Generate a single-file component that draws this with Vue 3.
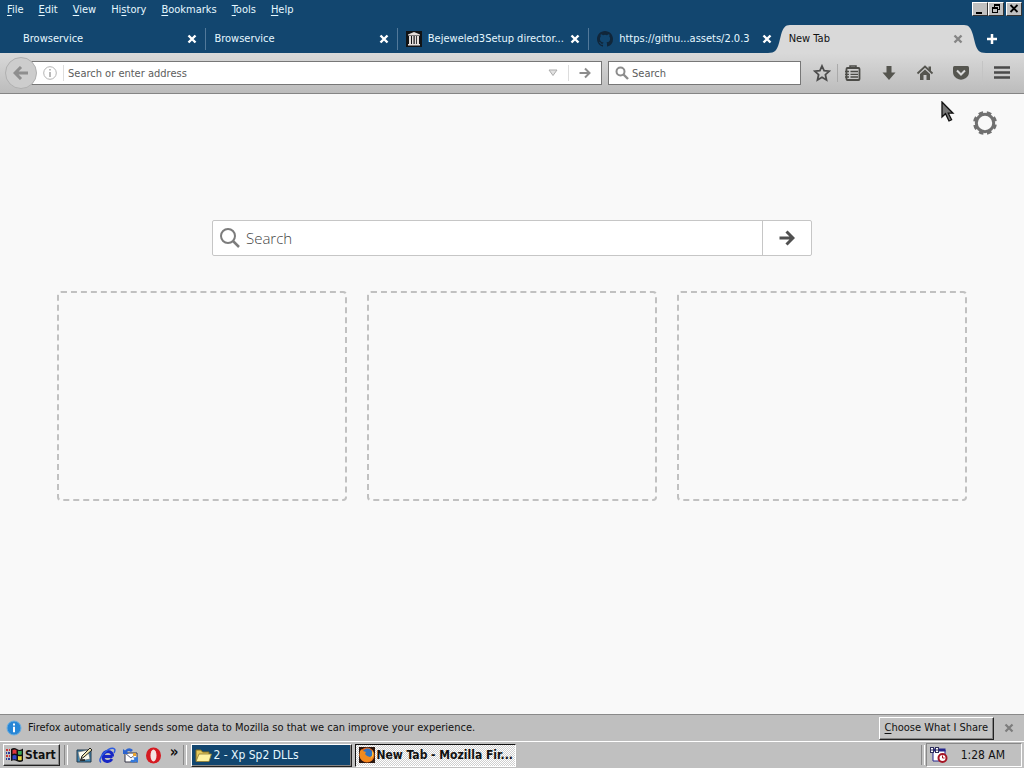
<template>
  <div class="desktop">
    <header class="chrome">
      <div class="menu-row">
        <nav class="menus">
          <button v-for="m in menus" :key="m.label" type="button" class="menu">
            {{ m.label.slice(0, m.key) }}<u>{{ m.label[m.key] }}</u>{{ m.label.slice(m.key + 1) }}
          </button>
        </nav>
        <div class="win-buttons">
          <button type="button" class="win-btn" aria-label="Minimize">
            <svg width="14" height="12" viewBox="0 0 14 12"><path d="M3 9h6v2H3z" /></svg>
          </button>
          <button type="button" class="win-btn" aria-label="Restore">
            <svg width="14" height="12" viewBox="0 0 14 12">
              <path fill-rule="evenodd" d="M5 1h6v6H9V6h1V3H6v1H5zM3 4h6v6H3zm1 2v3h4V6z" />
            </svg>
          </button>
          <button type="button" class="win-btn win-close" aria-label="Close">
            <svg width="14" height="12" viewBox="0 0 14 12">
              <path d="M3.5 2l7 7M10.5 2l-7 7" stroke="#000" stroke-width="1.8" />
            </svg>
          </button>
        </div>
      </div>

      <div class="tab-strip">
        <div v-for="(tab, i) in tabs" :key="i" class="tab" :class="{ active: tab.active, divided: i < 3 }">
          <span v-if="tab.active" class="tab-shape">
            <svg class="curve" width="22" height="28" viewBox="0 0 22 28">
              <path d="M0 28C7 28 9 25 11 18L13 10C15 3 17 0 22 0V28Z" fill="#d9d9d9" />
            </svg>
            <span class="tab-fill"></span>
            <svg class="curve" width="22" height="28" viewBox="0 0 22 28">
              <path d="M22 28C15 28 13 25 11 18L9 10C7 3 5 0 0 0V28Z" fill="#d9d9d9" />
            </svg>
          </span>
          <svg v-if="tab.icon === 'archive'" class="tab-icon" width="16" height="16" viewBox="0 0 16 16">
            <path d="M0 0h16v16H0z" fill="#101214" />
            <path d="M2 4.5V3.6L8 1l6 2.600v.9zM3 5h2v8H3zM6 5h1.500v8H6zM8.700 5h1.500v8H8.700zM11 5h2v8h-2zM2 13h12v1.500H2z" fill="#e4dedb" />
          </svg>
          <svg v-else-if="tab.icon === 'github'" class="tab-icon" width="16" height="16" viewBox="0 0 16 16">
            <path
              d="M8 0C3.580 0 0 3.580 0 8c0 3.540 2.290 6.530 5.470 7.590.4.070.55-.17.55-.38 0-.19-.01-.82-.01-1.490-2.010.37-2.530-.49-2.690-.94-.09-.23-.48-.94-.82-1.130-.28-.15-.68-.52-.01-.53.63-.01 1.080.58 1.230.82.720 1.210 1.870.87 2.330.66.07-.52.28-.87.51-1.070-1.780-.2-3.640-.89-3.640-3.950 0-.87.31-1.590.82-2.150-.08-.2-.36-1.020.08-2.120 0 0 .67-.21 2.200.82a7.600 7.600 0 0 1 4 0c1.530-1.040 2.200-.82 2.200-.82.44 1.100.16 1.920.08 2.120.51.56.82 1.270.82 2.150 0 3.070-1.870 3.750-3.650 3.950.29.25.54.73.54 1.480 0 1.070-.01 1.930-.01 2.200 0 .21.15.46.55.38A8.010 8.010 0 0 0 16 8c0-4.420-3.580-8-8-8z"
              fill="#10263a"
            />
          </svg>
          <span class="tab-label">{{ tab.label }}</span>
          <button type="button" class="tab-close" aria-label="Close tab">
            <svg width="10" height="10" viewBox="0 0 10 10">
              <path d="M1.500 1.500l7 7M8.500 1.500l-7 7" stroke="currentColor" stroke-width="2.400" />
            </svg>
          </button>
        </div>
        <button type="button" class="new-tab" aria-label="New tab">
          <svg width="12" height="12" viewBox="0 0 12 12">
            <path d="M6 1v10M1 6h10" stroke="#fff" stroke-width="2.500" />
          </svg>
        </button>
      </div>

      <div class="nav-bar">
        <button type="button" class="back" aria-label="Back">
          <svg width="16" height="14" viewBox="0 0 16 14">
            <path d="M8 1L2 7l6 6M2.500 7H15" fill="none" stroke="#8e8e8e" stroke-width="3" />
          </svg>
        </button>
        <div class="url-bar">
          <svg width="14" height="14" viewBox="0 0 14 14">
            <circle cx="7" cy="7" r="6.300" fill="none" stroke="#b4b4b4" />
            <path d="M6.200 3h1.600v1.600H6.200zM6.200 6h1.600v5H6.200z" fill="#a8a8a8" />
          </svg>
          <span class="thin-line"></span>
          <input type="text" class="url-input" placeholder="Search or enter address" aria-label="Address" />
          <svg width="10" height="8" viewBox="0 0 10 8">
            <path d="M1 1h8L5 6.500z" fill="#e2e2e2" stroke="#ababab" />
          </svg>
          <span class="thin-line go-line"></span>
          <button type="button" class="plain" aria-label="Go">
            <svg width="12" height="12" viewBox="0 0 12 12">
              <path d="M6 1.500L10.500 6 6 10.500M10 6H0.500" fill="none" stroke="#8d8d8d" stroke-width="2" />
            </svg>
          </button>
        </div>
        <div class="search-bar">
          <svg width="14" height="14" viewBox="0 0 14 14">
            <circle cx="5.500" cy="5.500" r="4" fill="none" stroke="#8c8c8c" stroke-width="2" />
            <path d="M8.500 8.500L13 13" stroke="#8c8c8c" stroke-width="2.400" />
          </svg>
          <input type="text" class="url-input" placeholder="Search" aria-label="Search" />
        </div>
        <div class="tools">
          <button type="button" class="tool star" aria-label="Bookmark">
            <svg width="18" height="18" viewBox="0 0 18 18">
              <path d="M9 2l2.100 4.700 5.100.5-3.800 3.500 1.100 5.200L9 13.200l-4.500 2.700 1.100-5.200L1.800 7.200l5.100-.5z" fill="none" stroke="#4c4c4c" stroke-width="1.800" />
            </svg>
          </button>
          <button type="button" class="tool" aria-label="Bookmarks list">
            <svg width="18" height="18" viewBox="0 0 18 18">
              <path d="M6 4V2h6v2" fill="none" stroke="#4b4b47" stroke-width="1.500" />
              <rect x="2.500" y="4" width="13" height="12" rx="1" fill="none" stroke="#4b4b47" stroke-width="1.800" />
              <path d="M1 7.500h4M6.500 7.500H14M1 10.300h4M6.500 10.300H14M1 13h4M6.500 13H14" fill="none" stroke="#4b4b47" stroke-width="1.300" />
            </svg>
          </button>
          <button type="button" class="tool" aria-label="Downloads">
            <svg width="18" height="18" viewBox="0 0 18 18">
              <path d="M6.500 2h5v6.500h4L9 16 2.500 8.500h4z" fill="#55554f" />
            </svg>
          </button>
          <button type="button" class="tool" aria-label="Home">
            <svg width="18" height="18" viewBox="0 0 18 18">
              <path d="M1.500 9.500L9 2.500l7.500 7" fill="none" stroke="#55554f" stroke-width="1.800" />
              <path d="M12.500 2.500H15v5l-2.500-2zM4 10l5-4.500L14 10v6h-3.500v-5h-3v5H4z" fill="#55554f" />
            </svg>
          </button>
          <button type="button" class="tool" aria-label="Pocket">
            <svg width="18" height="18" viewBox="0 0 18 18">
              <path d="M2.500 2h13Q17 2 17 3.500V8q0 4-3.500 6.300Q9 17 4.500 14.300 1 12 1 8V3.500Q1 2 2.500 2z" fill="#55554f" />
              <path d="M5 6.500L9 10.500l4-4" fill="none" stroke="#d8d8d8" stroke-width="2" />
            </svg>
          </button>
          <button type="button" class="tool burger" aria-label="Open menu">
            <svg width="18" height="18" viewBox="0 0 18 18">
              <path d="M1 3.500h16M1 8.500h16M1 13.500h16" stroke="#4a4a4a" stroke-width="2.600" />
            </svg>
          </button>
        </div>
      </div>
    </header>

    <main class="newtab">
      <div class="newtab-top">
        <button type="button" class="plain" aria-label="Customize">
          <svg width="24" height="24" viewBox="0 0 24 24">
            <circle cx="12" cy="12" r="8.700" fill="none" stroke="#707070" stroke-width="3" />
            <circle cx="12" cy="12" r="10.600" fill="none" stroke="#707070" stroke-width="2.600" stroke-dasharray="4.660 3.660" stroke-dashoffset="-1.500" />
          </svg>
        </button>
      </div>
      <form class="search-form" @submit.prevent>
        <svg class="glass" width="20" height="20" viewBox="0 0 20 20">
          <circle cx="8" cy="8" r="7" fill="none" stroke="#7c7c7c" stroke-width="2" />
          <path d="M13 13l6 6" stroke="#7c7c7c" stroke-width="2.500" />
        </svg>
        <input v-model="query" type="text" class="search-input" placeholder="Search" aria-label="Search the web" />
        <button type="submit" class="search-go" aria-label="Submit search">
          <svg width="16" height="16" viewBox="0 0 16 16">
            <path d="M7.500 1.500L14 8l-6.500 6.500M13 8H0.500" fill="none" stroke="#505050" stroke-width="3" />
          </svg>
        </button>
      </form>
      <div class="tiles">
        <div v-for="n in 3" :key="n" class="tile"></div>
      </div>
      <svg class="pointer" width="14" height="22" viewBox="0 0 14 22">
        <path d="M1 1v15l3.500-3.300L8 20l2.600-1.200-3.300-6.600H12z" fill="#777" stroke="#111" stroke-width="1.300" />
      </svg>
    </main>

    <div class="notice">
      <svg width="16" height="16" viewBox="0 0 16 16">
        <circle cx="8" cy="8" r="7" fill="#2786d6" stroke="#6aaee0" />
        <path d="M7 3.500h2v2H7zM7 6.800h2v5.500H7z" fill="#fff" />
      </svg>
      <span class="notice-text">Firefox automatically sends some data to Mozilla so that we can improve your experience.</span>
      <button type="button" class="choose"><u>C</u>hoose What I Share</button>
      <button type="button" class="plain notice-close" aria-label="Dismiss">
        <svg width="10" height="10" viewBox="0 0 10 10">
          <path d="M1.500 1.500l7 7M8.500 1.500l-7 7" stroke="#7d7d7d" stroke-width="2.200" />
        </svg>
      </button>
    </div>

    <footer class="taskbar">
      <button type="button" class="start">
        <svg width="18" height="16" viewBox="0 0 18 16">
          <path d="M5 2q3-2 6 0t6-.5V14q-3 2-6 .3T5 14z" fill="#111" />
          <path d="M6.500 3q2-1 4 .1V7q-2-1-4 0z" fill="#e0343a" />
          <path d="M12 3.700q2 .6 3.700 0v3.800q-1.700.6-3.700 0z" fill="#3aa856" />
          <path d="M6.500 8.500q2-1 4 0v4.300q-2-1-4 0z" fill="#3046c8" />
          <path d="M12 9q2 .6 3.700 0v4q-1.700.6-3.700 0z" fill="#e8d53c" />
          <path d="M0 3h2M3 3h1M0 9h2M3 9h1" stroke="#c33" stroke-width="2" />
          <path d="M0 6h1M2 6h2M0 12h1M2 12h2" stroke="#2a3a9c" stroke-width="2" />
        </svg>
        Start
      </button>
      <span class="grip"></span>
      <div class="quick">
        <button type="button" class="plain" aria-label="Show Desktop">
          <svg width="17" height="17" viewBox="0 0 17 17">
            <path d="M1 3h14v12H1z" fill="#3e86b4" stroke="#23384a" />
            <path d="M2 5l10-2 2 9-10 2z" fill="#fbfbf0" stroke="#666" stroke-width=".6" />
            <path d="M5 12l1-3 8-8 2 2-8 7z" fill="#efe5b0" stroke="#222" />
            <path d="M4 13h5" stroke="#111" stroke-width="1.500" />
          </svg>
        </button>
        <button type="button" class="plain" aria-label="Internet Explorer">
          <svg width="17" height="17" viewBox="0 0 17 17">
            <path d="M13.500 9.500H4.500M13 12Q11 15 8 14.500 4 14 4 9.500 4 4.500 9 4.500q4.500 0 4.500 5" fill="none" stroke="#1726c4" stroke-width="3" />
            <path d="M2 15.500Q-1 13 4.500 6.500 12-.5 15.500 2q1 1-.5 4" fill="none" stroke="#2d5be0" stroke-width="1.500" />
          </svg>
        </button>
        <button type="button" class="plain" aria-label="Outlook Express">
          <svg width="17" height="17" viewBox="0 0 17 17">
            <path d="M3 6h12v9H3z" fill="#fff" stroke="#334" />
            <path d="M3 6l6 5 6-5" fill="none" stroke="#667" />
            <path d="M11 6h3v3h-3z" fill="#e8a32e" />
            <path d="M1 7V2l2 1.500Q7-.5 11 3L9 5Q6 3 5 5.500L7 7z" fill="#2b63cf" />
            <path d="M16 10v6l-2-1.500q-3 2-6 0l1.500-2q2 1 3-.5L11 10.500z" fill="#3479dc" />
          </svg>
        </button>
        <button type="button" class="plain" aria-label="Opera">
          <svg width="17" height="17" viewBox="0 0 17 17">
            <ellipse cx="8.500" cy="8.500" rx="7.500" ry="8" fill="#d51b22" />
            <ellipse cx="8.500" cy="8.500" rx="3" ry="6" fill="#f4e4e2" />
          </svg>
        </button>
        <button type="button" class="plain more" aria-label="More">»</button>
      </div>
      <span class="grip"></span>
      <button type="button" class="task folder">
        <svg width="17" height="15" viewBox="0 0 17 15">
          <path d="M1 13V2h5l1.500 2H14v9z" fill="#e5c95a" stroke="#806a20" />
          <path d="M1 13.500L4 6h12.500L14 13.500z" fill="#fff2a0" stroke="#8d7a32" stroke-width=".8" />
        </svg>
        <span class="task-label">2 - Xp Sp2 DLLs</span>
      </button>
      <button type="button" class="task pressed">
        <svg width="16" height="16" viewBox="0 0 16 16">
          <path d="M0 0h16v16H0z" fill="#2a1710" />
          <circle cx="8" cy="8" r="7.500" fill="#e8661b" />
          <circle cx="8.500" cy="6.500" r="5" fill="#3273bd" />
          <path d="M1 4l2-2 1 2 3 1-1 2 2 2 3 1q3-1 3-5l1 2q0 7-7 8-7-1-7.500-7z" fill="#f28a1e" />
          <path d="M13 3q2 3 1 6l-2 3q2-4 1-9z" fill="#ffd34a" />
        </svg>
        <span class="task-label">New Tab - Mozilla Fir...</span>
      </button>
      <span class="grip tray-grip"></span>
      <div class="tray">
        <svg width="18" height="16" viewBox="0 0 18 16">
          <path d="M3 3h12v11H3z" fill="#fff" stroke="#24248c" />
          <path d="M2.500 3h13" stroke="#24248c" stroke-width="3" />
          <path d="M0 0h4v6H0zM5 0h4v6H5z" fill="#30305c" />
          <path d="M1 1h2v1.500H1zM1 3.500h2V5H1zM6 1h2v1.500H6zM6 3.500h2V5H6z" fill="#fff" />
          <circle cx="12.500" cy="11" r="4" fill="#fff" stroke="#a51424" stroke-width="2" />
          <path d="M12.500 8.500V11h2" fill="none" stroke="#a51424" />
        </svg>
        <span>1:28 AM</span>
      </div>
    </footer>
  </div>
</template>

<script setup>
import { ref } from 'vue';

const query = ref('');

// key = index of the underlined access key
const menus = [
  { label: 'File', key: 0 },
  { label: 'Edit', key: 0 },
  { label: 'View', key: 0 },
  { label: 'History', key: 2 },
  { label: 'Bookmarks', key: 0 },
  { label: 'Tools', key: 0 },
  { label: 'Help', key: 0 },
];

const tabs = [
  { label: 'Browservice' },
  { label: 'Browservice' },
  { label: 'Bejeweled3Setup director...', icon: 'archive' },
  { label: 'https://githu...assets/2.0.3', icon: 'github' },
  { label: 'New Tab', active: true },
];
</script>

<style>
body {
  margin: 0;
}
</style>

<style scoped>
.desktop {
  display: flex;
  flex-direction: column;
  min-height: 100vh;
  font-family: 'DejaVu Sans Condensed', 'DejaVu Sans', sans-serif;
  font-size: 11px;
  line-height: 14px;
  color: #111;
  background: #c0c0c0;
}

button,
input {
  font: inherit;
  color: inherit;
  margin: 0;
  padding: 0;
  border: 0;
  background: none;
}

svg {
  display: block;
  flex-shrink: 0;
}

u {
  text-underline-offset: 2px;
}

.plain {
  display: flex;
  align-items: center;
}

/* title and menus */
.chrome {
  background: #12466f;
}

.menu-row {
  display: flex;
  justify-content: space-between;
  height: 25px;
}

.menus {
  display: flex;
  align-items: flex-start;
  gap: 15px;
  padding: 3px 7px;
  color: #e6f8ff;
}

.win-buttons {
  display: flex;
  align-items: flex-start;
  padding: 2px 2px 0 0;
}

.win-btn {
  width: 16px;
  height: 14px;
  background: #c0c0c0;
  border: 1px solid;
  border-color: #fff #333 #333 #fff;
}

.win-close {
  margin-left: 2px;
}

/* tabs */
.tab-strip {
  display: flex;
  height: 28px;
  padding-left: 15px;
}

.tab {
  position: relative;
  display: flex;
  flex: 1;
  align-items: center;
  min-width: 0;
  padding: 0 9px 0 8px;
  color: #e6f8ff;
}

.tab.divided::after {
  content: '';
  position: absolute;
  right: 0;
  top: 3px;
  bottom: 3px;
  border-right: 1px solid #52799a;
}

.tab-icon {
  margin-right: 6px;
}

.tab-label {
  position: relative;
  flex: 1;
  overflow: hidden;
  white-space: nowrap;
}

.tab-close {
  position: relative;
  color: #fff;
}

.tab.active {
  color: #111;
}

.tab.active .tab-close {
  color: #858585;
}

.tab-shape {
  position: absolute;
  inset: 0 -14px 0 -13px;
  display: flex;
}

.tab-fill {
  flex: 1;
  background: #d9d9d9;
}

.new-tab {
  display: flex;
  align-items: center;
  justify-content: center;
  width: 52px;
  padding-right: 13px;
}

/* navigation */
.nav-bar {
  display: flex;
  align-items: center;
  height: 40px;
  padding: 0 4px 0 5px;
  background: linear-gradient(#d9d9d9, #bcbcbc);
  border-bottom: 1px solid #858585;
}

.back {
  position: relative;
  z-index: 1;
  display: flex;
  align-items: center;
  justify-content: center;
  width: 32px;
  height: 32px;
  margin-right: -6px;
  border: 1px solid #b0b0b0;
  border-radius: 50%;
  background: #cdcdcd;
}

.url-bar,
.search-bar {
  display: flex;
  align-items: center;
  box-sizing: border-box;
  height: 24px;
  background: #fff;
  border: 1px solid #777;
}

.url-bar {
  flex: 1;
  padding: 0 10px 0 11px;
}

.search-bar {
  flex: 0 1 193px;
  margin-left: 6px;
  padding-left: 6px;
}

.thin-line {
  height: 16px;
  margin: 0 4px 0 6px;
  border-left: 1px solid #ddd;
}

.go-line {
  margin: 0 10px;
}

.url-input {
  flex: 1;
  min-width: 0;
  padding-top: 2px;
  outline: 0;
}

.search-bar .url-input {
  padding-left: 3px;
}

.url-input::placeholder {
  color: #5c5c5c;
  opacity: 1;
}

.tools {
  display: flex;
  align-items: center;
  padding-left: 5px;
}

.tool {
  display: flex;
  align-items: center;
  justify-content: center;
  width: 36px;
  height: 24px;
}

.star {
  width: 32px;
  height: 18px;
  margin-right: -3px;
  border-right: 1px solid #aaa;
}

.burger {
  margin-left: 3px;
  width: 38px;
  border-left: 1px solid #c4c4c4;
}

/* new tab page */
.newtab {
  position: relative;
  flex: 1;
  background: #f9f9f9;
}

.newtab-top {
  display: flex;
  justify-content: flex-end;
  padding: 17px 27px 0;
}

.search-form {
  display: flex;
  align-items: center;
  box-sizing: border-box;
  width: 600px;
  max-width: 100%;
  height: 36px;
  margin: 85px auto 35px;
  border: 1px solid #c6c6c6;
  border-radius: 2px;
  background: #fff;
}

.glass {
  margin-left: 7px;
}

.search-input {
  flex: 1;
  min-width: 0;
  padding: 0 6px;
  font-family: 'Open Sans', 'Noto Sans', sans-serif;
  font-size: 15px;
  font-weight: 300;
  line-height: 20px;
  outline: 0;
}

.search-input::placeholder {
  color: #444;
  opacity: 1;
}

.search-go {
  display: flex;
  align-items: center;
  justify-content: center;
  width: 49px;
  height: 34px;
  border-left: 1px solid #c6c6c6;
}

.tiles {
  display: flex;
  flex-wrap: wrap;
  justify-content: center;
  gap: 20px;
}

.tile {
  box-sizing: border-box;
  width: 290px;
  height: 210px;
  border: 2px dashed #c1c1c1;
  border-radius: 4px;
}

.pointer {
  position: absolute;
  right: 69px;
  top: 7px;
}

/* notification */
.notice {
  display: flex;
  align-items: center;
  height: 26px;
  padding: 0 10px 0 6px;
  background: #bfbfbf;
  border-top: 1px solid #8a8a8a;
}

.notice-text {
  flex: 1;
  padding-left: 6px;
}

.choose {
  height: 23px;
  padding: 0 5px;
  background: #c3c3c3;
  border: 1px solid;
  border-color: #fff #222 #222 #fff;
  box-shadow: inset -1px -1px #858585;
}

.notice-close {
  margin-left: 10px;
}

/* taskbar */
.taskbar {
  display: flex;
  align-items: center;
  height: 26px;
  padding: 0 2px 0 3px;
  background: #c0c0c0;
  border-top: 1px solid #fff;
  font-size: 12px;
}

.start {
  display: flex;
  align-items: center;
  gap: 1px;
  height: 22px;
  padding: 0 3px 0 2px;
  font-weight: bold;
  border: 1px solid;
  border-color: #fff #222 #222 #fff;
  box-shadow: inset -1px -1px #858585;
}

.grip {
  width: 2px;
  height: 20px;
  margin: 0 4px;
  border-left: 1px solid #8a8a8a;
  border-right: 1px solid #fff;
}

.quick {
  display: flex;
  align-items: center;
  gap: 6px;
  padding-left: 4px;
}

.more {
  height: 20px;
  padding: 0 1px 6px 2px;
  font-size: 15px;
  font-weight: bold;
}

.task {
  display: flex;
  align-items: center;
  gap: 1px;
  box-sizing: border-box;
  width: 161px;
  height: 23px;
  margin-right: 3px;
  padding: 0 2px 0 3px;
  border: 1px solid;
}

.task-label {
  white-space: nowrap;
}

.folder {
  color: #e6f8ff;
  background: #12466f;
  border-color: #fff #222 #222 #fff;
  box-shadow: inset -1px -1px #858585;
}

.pressed {
  font-weight: bold;
  border-color: #111 #fff #fff #111;
  background: repeating-conic-gradient(#fff 0 25%, #cfcfcf 0 50%) 0 0 / 2px 2px;
}

.tray-grip {
  margin-left: auto;
  margin-right: 1px;
}

.tray {
  display: flex;
  align-items: center;
  gap: 13px;
  height: 22px;
  padding: 0 16px 0 3px;
  border: 1px solid;
  border-color: #888 #fff #fff #888;
}
</style>
